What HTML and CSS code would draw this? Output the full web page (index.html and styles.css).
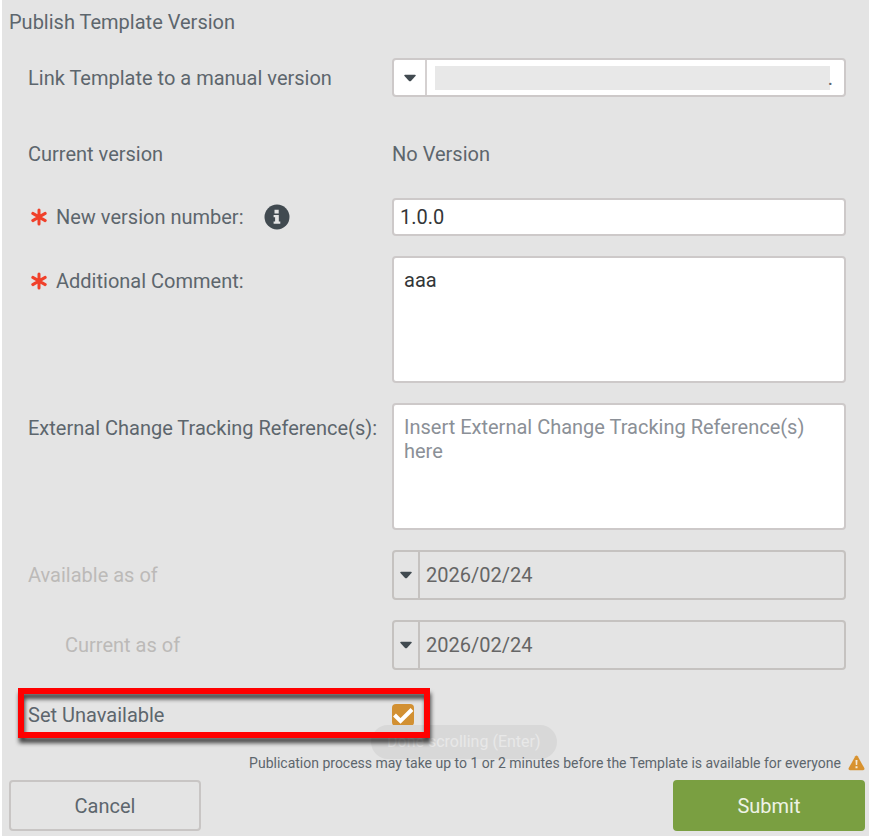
FILE: index.html
```html
<!DOCTYPE html>
<html lang="en">
<head>
<meta charset="utf-8">
<title>Publish Template Version</title>
<link rel="stylesheet" href="styles.css">
</head>
<body>
<main class="panel">
  <h1 class="title">Publish Template Version</h1>
  <form class="form">
    <div class="row">
      <label class="label" for="manual">Link Template to a manual version</label>
      <div class="combo">
        <button class="caret" type="button" aria-label="Open manual list"><svg width="12" height="8" viewBox="0 0 12 8"><path d="M1 .8h10q1.400 0 .5 1.200L7.200 6.800q-1.200 1.100-2.400 0L.5 2Q-.4.800 1 .8z"/></svg></button>
        <select class="select" id="manual"><option>.</option></select>
      </div>
    </div>
    <div class="row row-static">
      <span class="label">Current version</span>
      <span class="label">No Version</span>
    </div>
    <div class="row">
      <div class="label required">
        <svg class="star" width="16" height="18" viewBox="0 0 16 18"><path d="M8 2v14M1.800 5.400l12.400 7.200M14.200 5.400L1.800 12.600"/></svg>
        <label for="number">New version number:</label>
        <svg class="info" width="26" height="26" viewBox="0 0 26 26"><circle cx="13" cy="13" r="12.500"/><path d="M10.500 5.800h4.200v3.600h-4.200zM9.600 11h5.200v6.400h1.500v2.300H9.600v-2.300h1.500v-4.100H9.600z"/></svg>
      </div>
      <input class="field input" id="number" type="text" value="1.0.0">
    </div>
    <div class="row row-top">
      <div class="label required">
        <svg class="star" width="16" height="18" viewBox="0 0 16 18"><path d="M8 2v14M1.800 5.400l12.400 7.200M14.200 5.400L1.800 12.600"/></svg>
        <label for="comment">Additional Comment:</label>
      </div>
      <textarea class="field area" id="comment">aaa</textarea>
    </div>
    <div class="row row-top">
      <label class="label" for="reference">External Change Tracking Reference(s):</label>
      <textarea class="field area" id="reference" placeholder="Insert External Change Tracking Reference(s) here"></textarea>
    </div>
    <div class="row">
      <label class="label muted" for="available">Available as of</label>
      <div class="combo combo-date">
        <button class="caret" type="button" aria-label="Pick available date" disabled><svg width="12" height="8" viewBox="0 0 12 8"><path d="M1 .8h10q1.400 0 .5 1.200L7.200 6.800q-1.200 1.100-2.400 0L.5 2Q-.4.800 1 .8z"/></svg></button>
        <input class="date" id="available" type="text" value="2026/02/24" disabled>
      </div>
    </div>
    <div class="row">
      <label class="label muted nested" for="current">Current as of</label>
      <div class="combo combo-date">
        <button class="caret" type="button" aria-label="Pick current date" disabled><svg width="12" height="8" viewBox="0 0 12 8"><path d="M1 .8h10q1.400 0 .5 1.200L7.200 6.800q-1.200 1.100-2.400 0L.5 2Q-.4.800 1 .8z"/></svg></button>
        <input class="date" id="current" type="text" value="2026/02/24" disabled>
      </div>
    </div>
    <div class="row row-check">
      <label class="label" for="unavailable">Set Unavailable</label>
      <span class="check">
        <input class="checkbox" id="unavailable" type="checkbox" checked>
        <svg class="tick" width="22" height="22" viewBox="0 0 22 22"><path d="M2.500 11l6 6L20 5.500"/></svg>
      </span>
      <div class="toast">Done scrolling (Enter)</div>
      <div class="highlight"></div>
    </div>
  </form>
  <p class="note">Publication process may take up to 1 or 2 minutes before the Template is available for everyone
    <svg width="17" height="16" viewBox="0 0 17 16"><path class="warn" d="M7.300 1.300q1.200-1.500 2.400 0l6.600 11.800q.7 1.900-1.300 2.100H2Q0 15 .7 13.100z"/><path class="mark" d="M7.500 5h2l-.3 5H7.800zM7.500 11.300h2v2h-2z"/></svg>
  </p>
  <div class="actions">
    <button class="btn" type="button">Cancel</button>
    <button class="btn btn-primary" type="submit">Submit</button>
  </div>
</main>
</body>
</html>
```
FILE: styles.css
```css
* {
  box-sizing: border-box;
}

body {
  margin: 0 1px 0 2px;
  background: #fff;
  color: #5d666d;
  font: 20px/24px Roboto, "Open Sans", sans-serif;
}

button,
input,
select,
textarea {
  font: inherit;
  color: inherit;
  margin: 0;
}

svg {
  display: block;
  flex: none;
}

.panel {
  min-height: 100vh;
  padding: 10px 4px 4px 7px;
  background: #e4e4e4;
}

.title {
  margin: 0;
  font-size: 20px;
  font-weight: 400;
}

.form {
  display: grid;
  gap: 20px;
  padding: 24px 19px 0;
}

.row {
  display: grid;
  grid-template-columns: 364px minmax(0, 1fr);
  align-items: center;
  position: relative;
}

.row-static {
  padding: 25px 0 12px;
}

.row-top {
  align-items: start;
}

.row-top .label {
  padding-top: 13px;
}

.row-check {
  min-height: 50px;
}

.required {
  display: flex;
  align-items: center;
  gap: 9px;
  padding-left: 3px;
}

.star {
  fill: none;
  stroke: #f0402a;
  stroke-width: 3;
  stroke-linecap: round;
}

.info {
  margin-left: 12px;
  fill: #414a50;
}

.info path {
  fill: #e4e4e4;
}

.muted {
  color: #bcbab8;
}

.nested {
  padding-left: 37px;
}

.field,
.combo {
  width: 100%;
  border: 2px solid #cdc9c9;
  border-radius: 4px;
  background: #fff;
  outline: 0;
}

.field {
  color: #333638;
}

.input {
  height: 38px;
  padding: 0 6px;
}

.area {
  display: block;
  height: 127px;
  padding: 10px;
  resize: none;
}

.area::placeholder {
  color: #8b9097;
  opacity: 1;
}

.combo {
  display: flex;
  height: 39px;
}

.caret {
  display: grid;
  place-items: center;
  flex: none;
  width: 33px;
  padding: 0;
  border: 0;
  border-right: 2px solid #d5d1d1;
  background: none;
  fill: #414a50;
}

.select {
  flex: 1;
  min-width: 0;
  padding: 0 11px 0 0;
  border: 0;
  appearance: none;
  text-align-last: right;
  background: linear-gradient(#e8e8e8, #e8e8e8) 8px center / calc(100% - 22px) 24px no-repeat;
}

.combo-date {
  height: 50px;
  border-color: #c5c2c0;
  background: none;
}

.combo-date .caret {
  width: 26px;
  border-color: #c5c2c0;
}

.date {
  flex: 1;
  min-width: 0;
  padding: 0 6px;
  border: 0;
  background: none;
  color: #666;
}

.check {
  display: grid;
  width: 22px;
  height: 22px;
}

.check > * {
  grid-area: 1 / 1;
}

.checkbox {
  width: 22px;
  height: 22px;
  appearance: none;
  border-radius: 4px;
  background: #d29032;
}

.tick {
  fill: none;
  stroke: #fff;
  stroke-width: 4;
  pointer-events: none;
}

.toast {
  position: absolute;
  top: 35px;
  left: 343px;
  padding: 5px 16px;
  border-radius: 17px;
  background: #d8d8d8;
  color: #e8e8e8;
  font-size: 16px;
  white-space: nowrap;
}

.highlight {
  position: absolute;
  top: -2px;
  left: -10px;
  width: 412px;
  height: 50px;
  border: 6px solid #f00;
  filter: drop-shadow(1px 5px 2px rgb(0 0 0 / 70%));
  pointer-events: none;
}

.note {
  display: flex;
  justify-content: flex-end;
  align-items: center;
  gap: 7px;
  position: relative;
  margin: 11px 0 5px;
  font-size: 14px;
}

.warn {
  fill: #d8922f;
}

.mark {
  fill: #f4ead8;
}

.actions {
  display: flex;
  justify-content: space-between;
}

.btn {
  width: 192px;
  height: 51px;
  border: 2px solid #c8c5c4;
  border-radius: 4px;
  background: none;
}

.btn-primary {
  border-color: #7a9f41;
  background: #7a9f41;
  color: #eef3e6;
}
```
